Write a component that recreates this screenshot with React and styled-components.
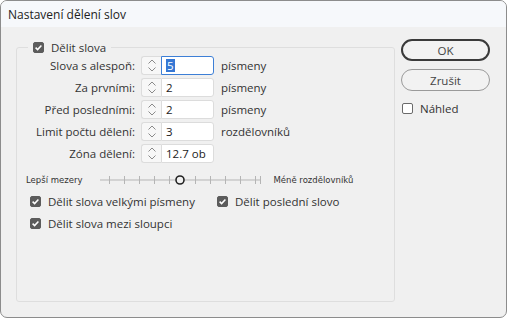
import React from 'react';
import styled, { createGlobalStyle } from 'styled-components';

const GlobalStyle = createGlobalStyle`
  html, body {
    margin: 0;
    padding: 0;
    background: #ffffff;
  }
  body {
    font-family: "Open Sans", "Noto Sans", sans-serif;
  }
`;

const Window = styled.div`
  box-sizing: border-box;
  width: 507px;
  height: 318px;
  border: 1px solid #8c8c8c;
  border-radius: 7px;
  background: #f0f0f0;
  overflow: hidden;
  display: flex;
  flex-direction: column;
  color: #333;
  font-size: 11.5px;
`;

const TitleBar = styled.div`
  height: 26px;
  flex: none;
  display: flex;
  align-items: center;
  padding-left: 7px;
  background: #f6f8fb;
  font-size: 12px;
  color: #222;
`;

const Body = styled.div`
  flex: 1;
  display: flex;
  padding: 12px 0 15px 15px;
  gap: 6px;
`;

const Group = styled.fieldset`
  box-sizing: border-box;
  width: 379px;
  margin: 1px 0 0 0;
  padding: 0;
  border: 1px solid #dedede;
  border-radius: 3px;
  display: flex;
  flex-direction: column;
`;

const Legend = styled.legend`
  margin-left: 11px;
  padding: 0 5px;
  display: flex;
  align-items: center;
  gap: 7px;
  line-height: 15px;
`;

const Box = styled.span`
  box-sizing: border-box;
  width: 11px;
  height: 11px;
  flex: none;
  border-radius: 2px;
  display: inline-flex;
  align-items: center;
  justify-content: center;
  background: ${p => (p.checked ? '#5c5c5c' : '#fff')};
  border: 1px solid ${p => (p.checked ? '#5c5c5c' : '#6a6a6a')};
`;

const Check = ({ checked }) => (
  <Box checked={checked}>
    {checked && (
      <svg width="9" height="9" viewBox="0 0 9 9">
        <path d="M1.6 4.6 L3.6 6.6 L7.4 2.4" fill="none" stroke="#fff" strokeWidth="1.5" />
      </svg>
    )}
  </Box>
);

const Fields = styled.div`
  display: grid;
  grid-template-columns: 118px 73px auto;
  column-gap: 6px;
  row-gap: 3px;
  margin-top: 1px;
  align-items: center;
`;

const Label = styled.span`
  text-align: right;
  white-space: nowrap;
`;

const Unit = styled.span`
  padding-left: 1px;
  white-space: nowrap;
`;

const Spinner = styled.div`
  display: flex;
  height: 19px;
`;

const Arrows = styled.div`
  box-sizing: border-box;
  width: 20px;
  border: 1px solid #dcdcdc;
  border-right: none;
  border-radius: 3px 0 0 3px;
  background: #f7f7f7;
  display: flex;
  align-items: center;
  justify-content: center;
`;

const Input = styled.div`
  box-sizing: border-box;
  flex: 1;
  border: 1px solid ${p => (p.focused ? '#3d7fd6' : '#dcdcdc')};
  border-radius: 0 3px 3px 0;
  background: #fff;
  display: flex;
  align-items: center;
  padding-left: 4px;
  color: #222;
`;

const Selected = styled.span`
  background: #3577d4;
  color: #fff;
  padding: 0 1px;
  line-height: 13px;
`;

const SpinArrows = () => (
  <Arrows>
    <svg width="10" height="15" viewBox="0 0 10 15">
      <path d="M1.5 5.5 L5 2 L8.5 5.5" fill="none" stroke="#8a8a8a" strokeWidth="1" />
      <path d="M1.5 9.5 L5 13 L8.5 9.5" fill="none" stroke="#8a8a8a" strokeWidth="1" />
    </svg>
  </Arrows>
);

const SliderRow = styled.div`
  display: flex;
  align-items: center;
  margin: 11px 0 0 9px;
  font-family: "DejaVu Sans", Verdana, sans-serif;
  font-size: 8.5px;
  color: #333;
`;

const Track = styled.svg`
  margin: 0 11px 0 18px;
  flex: none;
`;

const Options = styled.div`
  display: grid;
  grid-template-columns: 187px auto;
  row-gap: 6px;
  margin: 7px 0 0 13px;
`;

const Option = styled.label`
  display: flex;
  align-items: center;
  gap: 7px;
  height: 16px;
  white-space: nowrap;
`;

const Side = styled.div`
  width: 89px;
  display: flex;
  flex-direction: column;
`;

const Button = styled.div`
  box-sizing: border-box;
  height: 22px;
  border-radius: 11px;
  border: ${p => (p.primary ? '2px solid #3a3a3a' : '1px solid #9a9a9a')};
  display: flex;
  align-items: center;
  justify-content: center;
  color: #444;
  background: #f2f2f2;
  margin-bottom: 8px;
`;

const Preview = styled(Option)`
  margin: 1px 0 0 1px;
`;

const ticks = [9, 24, 39, 54, 69, 95, 110, 125, 140, 155, 160];

const Slider = () => (
  <Track width="162" height="12" viewBox="0 0 162 12">
    <line x1="0" y1="6" x2="160" y2="6" stroke="#b5b5b5" strokeWidth="1" />
    {ticks.map(x => (
      <line key={x} x1={x + 0.5} y1="2" x2={x + 0.5} y2="10" stroke="#b5b5b5" strokeWidth="1" />
    ))}
    <circle cx="80" cy="6" r="4" fill="#f0f0f0" stroke="#222" strokeWidth="1.6" />
  </Track>
);

const rows = [
  { label: 'Slova s alespoň:', value: '5', unit: 'písmeny', focused: true },
  { label: 'Za prvními:', value: '2', unit: 'písmeny' },
  { label: 'Před posledními:', value: '2', unit: 'písmeny' },
  { label: 'Limit počtu dělení:', value: '3', unit: 'rozdělovníků' },
  { label: 'Zóna dělení:', value: '12.7 ob', unit: '' },
];

export default function App() {
  return (
    <>
      <GlobalStyle />
      <Window>
        <TitleBar>Nastavení dělení slov</TitleBar>
        <Body>
          <Group>
            <Legend>
              <Check checked />
              Dělit slova
            </Legend>
            <Fields>
              {rows.map(r => (
                <React.Fragment key={r.label}>
                  <Label>{r.label}</Label>
                  <Spinner>
                    <SpinArrows />
                    <Input focused={r.focused}>
                      {r.focused ? <Selected>{r.value}</Selected> : r.value}
                    </Input>
                  </Spinner>
                  <Unit>{r.unit}</Unit>
                </React.Fragment>
              ))}
            </Fields>
            <SliderRow>
              <span>Lepší mezery</span>
              <Slider />
              <span>Méně rozdělovníků</span>
            </SliderRow>
            <Options>
              <Option><Check checked />Dělit slova velkými písmeny</Option>
              <Option><Check checked />Dělit poslední slovo</Option>
              <Option><Check checked />Dělit slova mezi sloupci</Option>
            </Options>
          </Group>
          <Side>
            <Button primary>OK</Button>
            <Button>Zrušit</Button>
            <Preview><Check />Náhled</Preview>
          </Side>
        </Body>
      </Window>
    </>
  );
}
